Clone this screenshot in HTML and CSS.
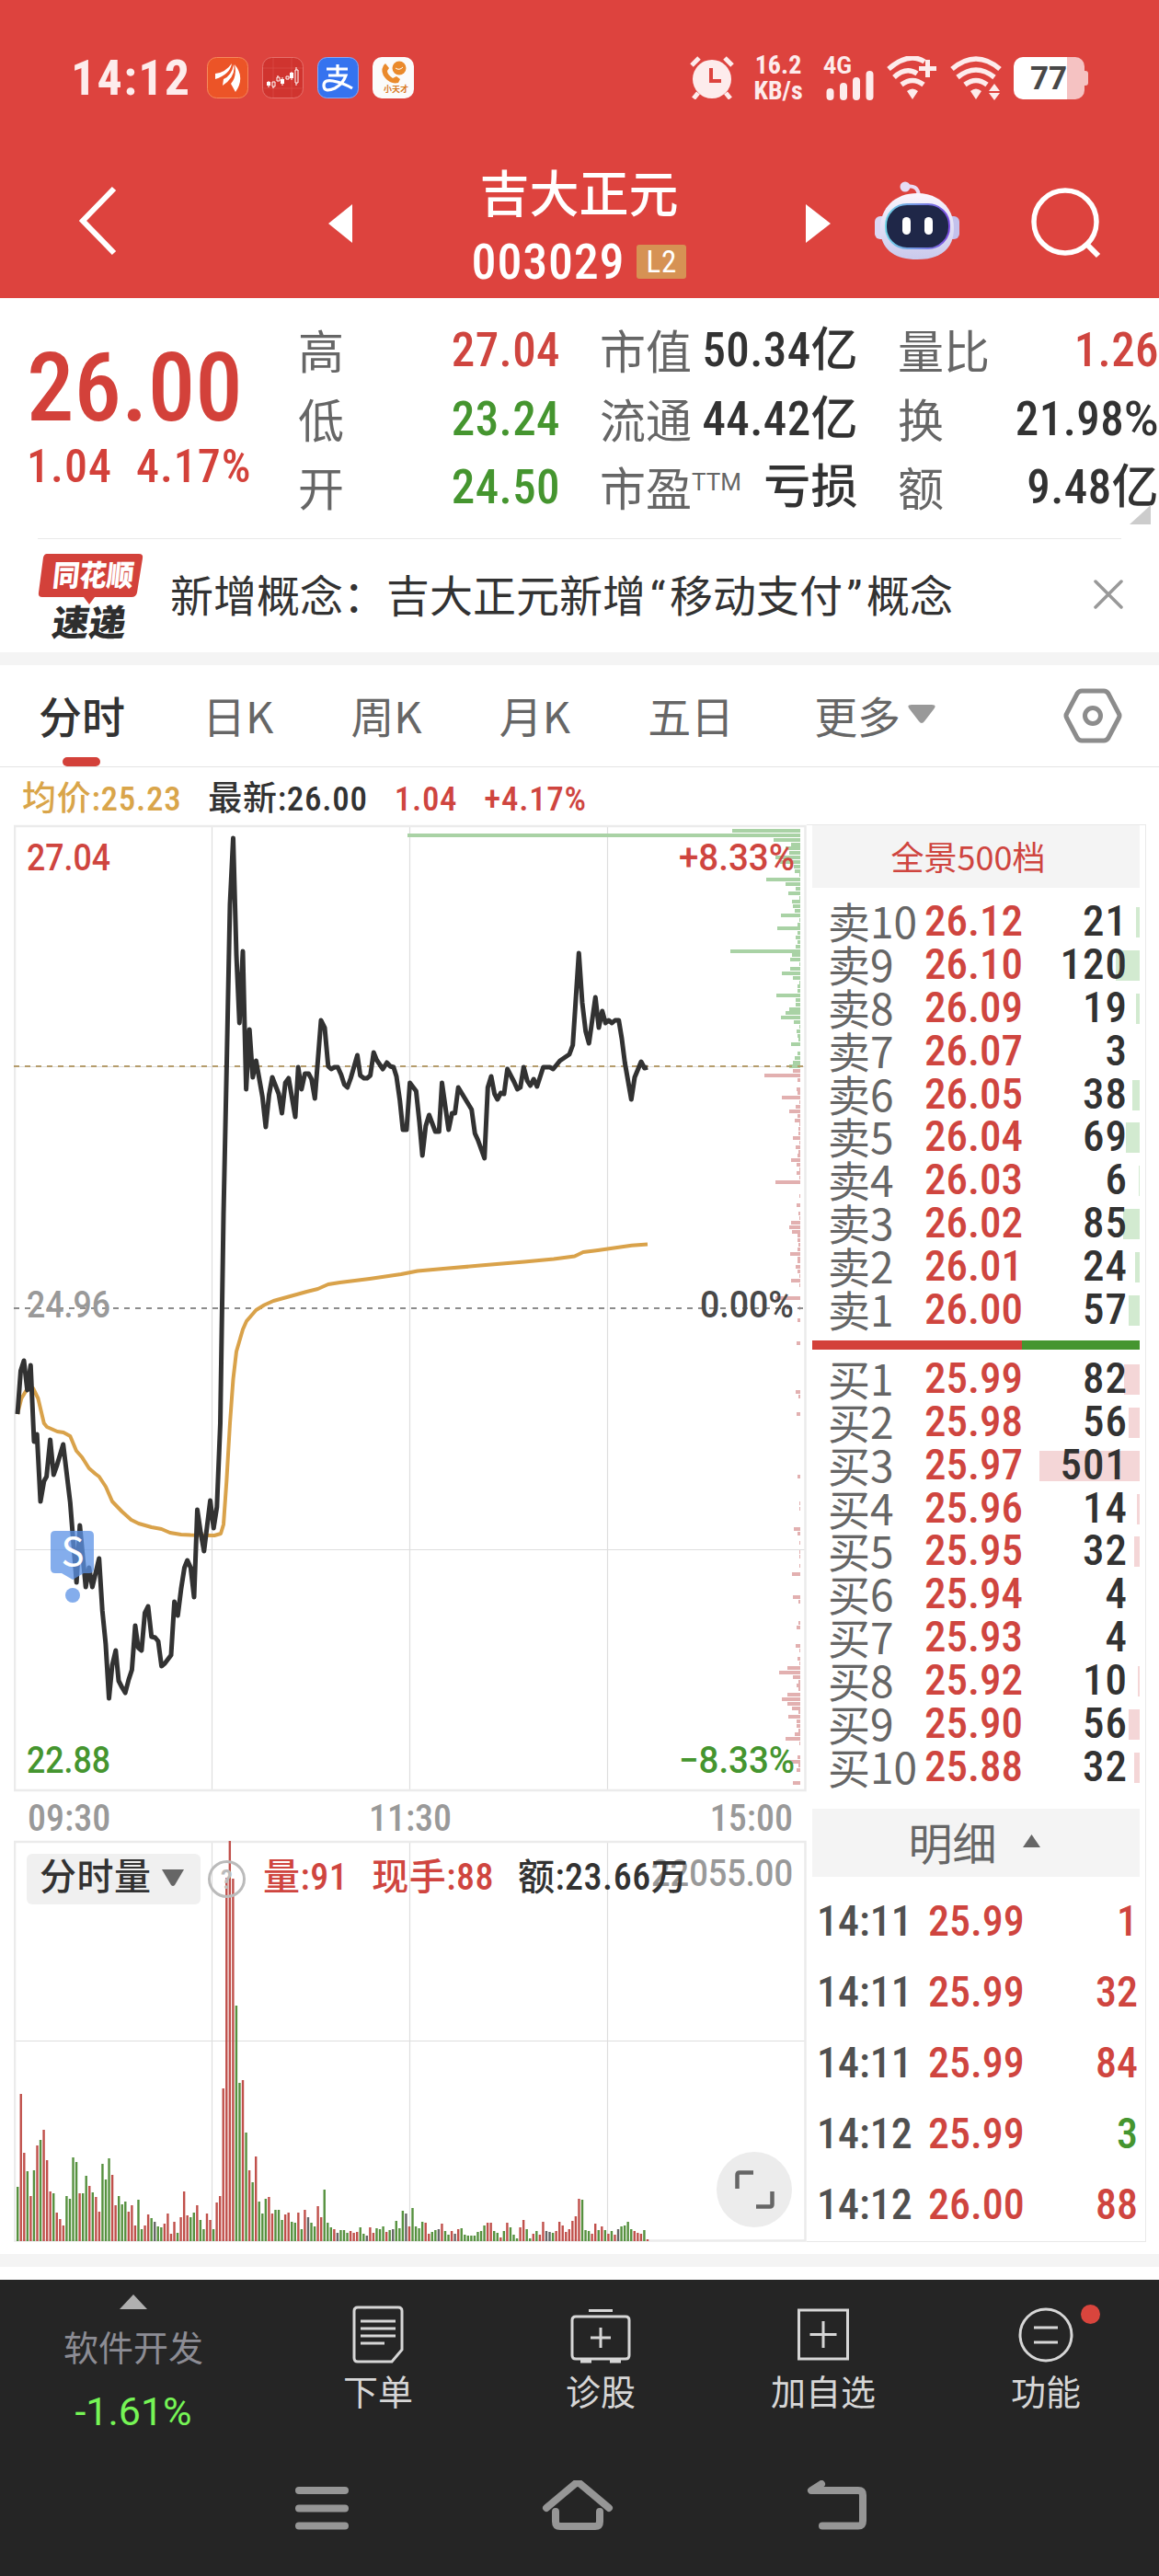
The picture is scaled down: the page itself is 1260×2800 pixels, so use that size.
FILE: index.html
```html
<!DOCTYPE html>
<html lang="zh-CN">
<head>
    <meta charset="UTF-8">
    <meta name="viewport" content="width=device-width, initial-scale=1.0">
    <title>吉大正元 003029</title>
    <link rel="stylesheet" href="styles.css">
</head>
<body>
    <header class="header">
        <div class="status-bar">
            <span class="clock">14:12</span>
            <div class="app-icons">
                <svg width="45" height="45" viewBox="0 0 45 45"><rect x=".5" y=".5" width="44" height="44" rx="10" fill="#ec5427" stroke="#f58a5c"/><path d="M9 24V18Q20 17 27 7Q25 19 9 24zM17 31L18 24Q27 20 29 8Q32 21 17 31zM31 38L26 29Q33 21 30 8Q42 22 31 38z" fill="#fff"/></svg>
                <svg width="45" height="45" viewBox="0 0 45 45"><rect x=".5" y=".5" width="44" height="44" rx="10" fill="#d0342f" stroke="#e5706b"/><path d="M12 1V44M32 1V44M1 12H44M1 34H44" stroke="#dc504a" stroke-width=".6"/><path d="M5 27h4v4H5zM20 24h4v5h-4zM30 17h4v6h-4z" fill="#fff"/><path d="M11 27h3v5h-3zM16 22h3v4h-3zM26 21h3v3h-3zM36 14h3v14h-3zM7 26v7M12 32v2M17 20v2M22 22v9M32 16v9M37 11v3M37 28v3" fill="none" stroke="#fff"/></svg>
                <svg width="45" height="45" viewBox="0 0 45 45"><rect x=".5" y=".5" width="44" height="44" rx="10" fill="#3573ef" stroke="#86aaf8"/><path d="M10 13H33M22 8V19M12 20H31Q28 29 19 34Q7 39 7 31Q7 24 17 26Q28 28 38 34" fill="none" stroke="#fff" stroke-width="3.2"/></svg>
                <svg width="45" height="45" viewBox="0 0 45 45"><rect width="45" height="45" rx="10" fill="#fbfbfb"/><circle cx="29" cy="12" r="7.5" fill="#ea8a2c"/><path d="M12 9Q8 16 14 23Q20 30 28 28L30 24L26 21L22 23Q16 19 16 15L18 12L14 7z" fill="#ea8a2c"/><path d="M25 12Q29 15 33 11" fill="none" stroke="#fff"/><text x="12" y="38" class="mini-text">小天才</text></svg>
            </div>
            <div class="status-right">
                <svg class="alarm" width="48" height="47" viewBox="0 0 48 47"><circle cx="24" cy="25" r="21" fill="#fdecec"/><path d="M2 10L10 2M38 2L46 10M9 40L4 46M39 40L44 46" stroke="#fdecec" stroke-width="5"/><path d="M23 13V27H34" fill="none" stroke="#dd433e" stroke-width="4"/></svg>
                <div class="speed">16.2<br>KB/s</div>
                <svg width="56" height="48" viewBox="0 0 56 48"><text x="0" y="19" class="net-text" textLength="31" lengthAdjust="spacingAndGlyphs">4G</text><path d="M7.500 39V44M22 33V44M36 27V44M50.500 20V44" stroke="#fdecec" stroke-width="8" stroke-linecap="round"/></svg>
                <svg class="wifi" width="56" height="48" viewBox="0 0 56 48"><path d="M2 14Q24-5 41 6M8 23Q21 11 33 19M16 31Q28 22 40 31" fill="none" stroke="#fdecec" stroke-width="5.500"/><path d="M22 38Q28 33 34 38L28 47zM42 4h5v7h7v5h-7v7h-5v-7h-7v-5h7z" fill="#fdecec"/></svg>
                <svg class="wifi" width="56" height="48" viewBox="0 0 56 48"><path d="M2 14Q28-8 54 14M8 23Q28 7 48 23M16 31Q28 22 40 31" fill="none" stroke="#fdecec" stroke-width="5.500"/><path d="M22 38Q28 33 34 38L28 47zM42 38l6-8 6 8zM42 40h12l-6 8z" fill="#fdecec"/></svg>
                <div class="battery">77</div>
            </div>
        </div>
        <div class="title-bar">
            <svg class="back" width="44" height="76" viewBox="0 0 44 76"><path d="M39 3L5 38L39 73" fill="none" stroke="#fff" stroke-width="6"/></svg>
            <svg class="prev" width="26" height="42" viewBox="0 0 26 42"><path d="M26 0V42L0 21z" fill="#fff"/></svg>
            <div class="stock">
                <div class="stock-name">吉大正元</div>
                <div class="stock-code"><span class="num">003029</span><span class="level">L2</span></div>
            </div>
            <svg class="next" width="27" height="42" viewBox="0 0 27 42"><path d="M0 0V42L27 21z" fill="#fff"/></svg>
            <svg class="robot" width="92" height="88" viewBox="0 0 92 88">
                <defs>
                    <linearGradient id="shell" x2="0" y2="1"><stop offset="0" stop-color="#fbf6fd"/><stop offset="1" stop-color="#c9c9ec"/></linearGradient>
                    <linearGradient id="rim"><stop offset="0" stop-color="#6fd3e6"/><stop offset="1" stop-color="#7a4be0"/></linearGradient>
                </defs>
                <path d="M34 7Q46 4 48 16" fill="none" stroke="#eadcf3" stroke-width="4"/><circle cx="33" cy="7" r="5.500" fill="#e6dcf5"/>
                <rect x="0" y="39" width="14" height="25" rx="6" fill="#dcd8f3"/><rect x="78" y="39" width="14" height="25" rx="6" fill="#c3c1ec"/>
                <path d="M46 14C70 14 86 30 86 52C86 74 72 86 46 86C20 86 6 74 6 52C6 30 22 14 46 14z" fill="url(#shell)"/>
                <rect x="12" y="26" width="69" height="48" rx="23" fill="#1f2748" stroke="url(#rim)" stroke-width="2"/>
                <rect x="30" y="40" width="9" height="19" rx="4.500" fill="#fff"/><rect x="54" y="40" width="9" height="19" rx="4.500" fill="#fff"/>
            </svg>
            <svg class="search" width="80" height="80" viewBox="0 0 80 80"><circle cx="38" cy="38" r="34" fill="none" stroke="#fff" stroke-width="5.500"/><path d="M61 62L74 75" stroke="#fff" stroke-width="6"/></svg>
        </div>
    </header>

    <section class="quote">
        <div class="price-box">
            <div class="price num">26.00</div>
            <div class="change num"><span>1.04</span><span>4.17%</span></div>
        </div>
        <dl class="stats">
            <div><dt>高</dt><dd class="num up">27.04</dd></div>
            <div><dt>市值</dt><dd class="num">50.34亿</dd></div>
            <div><dt>量比</dt><dd class="num up">1.26</dd></div>
            <div><dt>低</dt><dd class="num down">23.24</dd></div>
            <div><dt>流通</dt><dd class="num">44.42亿</dd></div>
            <div><dt>换</dt><dd class="num">21.98<span class="percent">%</span></dd></div>
            <div><dt>开</dt><dd class="num down">24.50</dd></div>
            <div><dt>市盈<sup>TTM</sup></dt><dd class="num">亏损</dd></div>
            <div><dt>额</dt><dd class="num">9.48亿</dd></div>
        </dl>
        <svg class="more-corner" width="23" height="21" viewBox="0 0 23 21"><path d="M23 0V21H0z" fill="#ccc"/></svg>
    </section>

    <section class="news">
        <svg class="news-logo" width="116" height="94" viewBox="0 0 116 94">
            <path d="M10 1H110Q115 1 114 6L108 43Q107 48 102 48H62L56 56L50 48H5Q0 48 1 43L6 5Q7 1 10 1z" fill="#d3413a"/>
            <text x="19" y="36" class="logo-top" transform="skewX(-6)" textLength="88" lengthAdjust="spacingAndGlyphs">同花顺</text>
            <text x="27" y="90" class="logo-bottom" transform="skewX(-8)" textLength="80" lengthAdjust="spacingAndGlyphs">速递</text>
        </svg>
        <p class="news-text">新增概念：吉大正元新增<span class="quote-mark">“</span>移动支付<span class="quote-mark">”</span>概念</p>
        <svg class="close" width="32" height="32" viewBox="0 0 32 32"><path d="M2 2L30 30M30 2L2 30" stroke="#999" stroke-width="3.500" stroke-linecap="round"/></svg>
    </section>

    <nav class="tabs">
        <a class="active">分时</a>
        <a>日K</a>
        <a>周K</a>
        <a>月K</a>
        <a>五日</a>
        <a class="more">更多<svg width="30" height="22" viewBox="0 0 30 22"><path d="M4 0H26Q32 0 28 5L18 18Q15 22 12 18L2 5Q-2 0 4 0z" fill="#999"/></svg></a>
        <svg class="setting" width="64" height="60" viewBox="0 0 64 60"><path d="M20 3H44Q47 3 49 6L60 27Q62 30 60 33L49 54Q47 57 44 57H20Q17 57 15 54L4 33Q2 30 4 27L15 6Q17 3 20 3z" fill="none" stroke="#8c8c8c" stroke-width="5"/><circle cx="32" cy="30" r="8.500" fill="none" stroke="#8c8c8c" stroke-width="5"/></svg>
    </nav>

    <main class="board">
        <div class="charts">
            <div class="legend num"><span class="avg">均价:25.23</span><span>最新:26.00</span><span class="up">1.04</span><span class="up">+4.17%</span></div>
            <svg class="price-chart" id="priceChart" width="862" height="1052" viewBox="15 896 862 1052">
                <path class="grid" d="M230.500 898V1946M445.500 898V1946M660.500 898V1946M15 1159.500H876M15 1684.500H876"/>
                <path class="frame" d="M16 898H875.500V1946H16z"/>
                <g id="chips"></g>
                <path class="last-line" d="M15 1159H876"/>
                <path class="base-line" d="M15 1422H876"/>
                <polyline id="avgLine" class="avg-line"/>
                <polyline id="priceLine" class="price-line"/>
                <g class="sell-mark">
                    <path d="M60 1664H97Q102 1664 102 1669V1705Q102 1710 97 1710H91L79 1717L67 1710H60Q55 1710 55 1705V1669Q55 1664 60 1664z"/>
                    <circle cx="79" cy="1734" r="8"/>
                    <text x="79" y="1702" text-anchor="middle">S</text>
                </g>
                <g class="axis-text">
                    <text class="t-up" x="29" y="946" textLength="91" lengthAdjust="spacingAndGlyphs">27.04</text>
                    <text class="t-up" x="738" y="946" textLength="126" lengthAdjust="spacingAndGlyphs">+8.33%</text>
                    <text class="t-gray" x="29" y="1432" textLength="91" lengthAdjust="spacingAndGlyphs">24.96</text>
                    <text class="t-dark" x="761" y="1432" textLength="102" lengthAdjust="spacingAndGlyphs">0.00%</text>
                    <text class="t-down" x="29" y="1927" textLength="91" lengthAdjust="spacingAndGlyphs">22.88</text>
                    <text class="t-down" x="738" y="1927" textLength="126" lengthAdjust="spacingAndGlyphs">−8.33%</text>
                </g>
            </svg>
            <div class="time-axis num"><span>09:30</span><span>11:30</span><span>15:00</span></div>
            <div class="volume">
                <svg id="volumeChart" width="862" height="437" viewBox="15 2000 862 437">
                    <path class="grid" d="M230.500 2002V2436M445.500 2002V2436M660.500 2002V2436M15 2218.500H876"/>
                    <path class="frame" d="M16 2002H875.500V2435.500H16z"/>
                    <g id="bars"></g>
                    <g class="axis-text"><text class="t-gray" x="708" y="2050" textLength="154" lengthAdjust="spacingAndGlyphs">22055.00</text></g>
                </svg>
                <div class="volume-legend num">
                    <span class="pill">分时量<svg width="24" height="18" viewBox="0 0 24 18"><path d="M0 0H24L14 17Q12 19 10 17z" fill="#666"/></svg></span>
                    <span class="help">?</span>
                    <span class="up">量:91</span><span class="up">现手:88</span><span>额:23.66万</span>
                </div>
                <svg class="expand" width="82" height="82" viewBox="0 0 82 82"><circle cx="41" cy="41" r="41" fill="#ececec"/><path d="M22.500 40V25Q22.500 22.500 25 22.500H40M60.500 43V57Q60.500 59.500 58 59.500H43" fill="none" stroke="#666" stroke-width="4.500"/></svg>
            </div>
        </div>

        <aside class="book">
            <div class="book-head">全景500档</div>
            <ul class="orders asks num">
                <li><i>卖10</i><b>26.12</b><em>21</em><s style="width: 4px"></s></li>
                <li><i>卖9</i><b>26.10</b><em>120</em><s style="width: 26px"></s></li>
                <li><i>卖8</i><b>26.09</b><em>19</em><s style="width: 4px"></s></li>
                <li><i>卖7</i><b>26.07</b><em>3</em><s style="width: 0"></s></li>
                <li><i>卖6</i><b>26.05</b><em>38</em><s style="width: 8px"></s></li>
                <li><i>卖5</i><b>26.04</b><em>69</em><s style="width: 15px"></s></li>
                <li><i>卖4</i><b>26.03</b><em>6</em><s style="width: 1px"></s></li>
                <li><i>卖3</i><b>26.02</b><em>85</em><s style="width: 18px"></s></li>
                <li><i>卖2</i><b>26.01</b><em>24</em><s style="width: 5px"></s></li>
                <li><i>卖1</i><b>26.00</b><em>57</em><s style="width: 12px"></s></li>
            </ul>
            <div class="ratio"><span style="width: 64.1%"></span></div>
            <ul class="orders bids num">
                <li><i>买1</i><b>25.99</b><em>82</em><s style="width: 17px"></s></li>
                <li><i>买2</i><b>25.98</b><em>56</em><s style="width: 12px"></s></li>
                <li><i>买3</i><b>25.97</b><em>501</em><s style="width: 109px"></s></li>
                <li><i>买4</i><b>25.96</b><em>14</em><s style="width: 3px"></s></li>
                <li><i>买5</i><b>25.95</b><em>32</em><s style="width: 6px"></s></li>
                <li><i>买6</i><b>25.94</b><em>4</em><s style="width: 0"></s></li>
                <li><i>买7</i><b>25.93</b><em>4</em><s style="width: 0"></s></li>
                <li><i>买8</i><b>25.92</b><em>10</em><s style="width: 2px"></s></li>
                <li><i>买9</i><b>25.90</b><em>56</em><s style="width: 12px"></s></li>
                <li><i>买10</i><b>25.88</b><em>32</em><s style="width: 6px"></s></li>
            </ul>
            <div class="book-head detail">明细<svg width="19" height="14" viewBox="0 0 19 14"><path d="M9.500 0L19 14H0z" fill="#666"/></svg></div>
            <ul class="ticks num">
                <li><i>14:11</i><b>25.99</b><em class="up">1</em></li>
                <li><i>14:11</i><b>25.99</b><em class="up">32</em></li>
                <li><i>14:11</i><b>25.99</b><em class="up">84</em></li>
                <li><i>14:12</i><b>25.99</b><em class="down">3</em></li>
                <li><i>14:12</i><b>26.00</b><em class="up">88</em></li>
            </ul>
        </aside>
    </main>

    <footer class="footer">
        <div class="actions">
            <div class="sector">
                <svg width="30" height="16" viewBox="0 0 30 16"><path d="M15 0L30 16H0z" fill="#b0b0b0"/></svg>
                <span>软件开发</span>
                <span class="sector-change">-1.61%</span>
            </div>
            <div class="action">
                <svg width="66" height="64" viewBox="0 0 66 64"><path d="M11 2H55Q59 2 59 6V48L48 61H11Q7 61 7 57V6Q7 2 11 2zM14 17H52M14 25H52M14 33H52M14 41H40"/></svg>
                <span>下单</span>
            </div>
            <div class="action">
                <svg width="66" height="64" viewBox="0 0 66 64"><path d="M6 12H60Q64 12 64 16V54Q64 58 60 58H6Q2 58 2 54V16Q2 12 6 12zM20 5.500H46M33 24V46M22 35H44M11 61H23M43 61H55"/></svg>
                <span>诊股</span>
            </div>
            <div class="action">
                <svg width="66" height="64" viewBox="0 0 66 64"><path d="M6.500 5H59.500V58H6.500zM33 17V46M18.500 31.500H47.500"/></svg>
                <span>加自选</span>
            </div>
            <div class="action">
                <svg width="66" height="64" viewBox="0 0 66 64"><circle cx="33" cy="32" r="28"/><path d="M20 24H46M20 40H46"/></svg>
                <span>功能</span>
                <em class="dot"></em>
            </div>
        </div>
        <div class="sys-nav">
            <svg width="62" height="60" viewBox="0 0 62 60"><path d="M6 11H56M6 30.500H56M6 49.500H56"/></svg>
            <svg width="78" height="60" viewBox="0 0 78 60"><path d="M5 30L36 4Q39 2 42 4L73 30M15 34V45Q15 50 20 50H58Q63 50 63 45V34"/></svg>
            <svg width="70" height="60" viewBox="0 0 70 60"><path d="M18 4L7 11H58Q63 11 63 16V44Q63 49.500 58 49.500H19"/></svg>
        </div>
    </footer>
    <script src="chart.js"></script>
</body>
</html>
```
FILE: styles.css
```css
* {
    box-sizing: border-box;
}
body {
    margin: 0;
    width: 1260px;
    height: 2800px;
    overflow: hidden;
    background-color: #fff;
    color: #323232;
    font-family: Roboto, "Noto Sans CJK SC", sans-serif;
}
svg {
    display: block;
    flex: none;
}
ul, dl, dd, p {
    margin: 0;
    padding: 0;
    list-style: none;
}
i, em, b, s {
    font-style: normal;
    text-decoration: none;
}
.num {
    font-weight: 500;
    font-stretch: 87%;
}
.up {
    color: #cf453f;
}
.down {
    color: #45952f;
}

/* header */
.header {
    height: 324px;
    background-color: #dd433e;
    color: #fff;
}
.status-bar {
    display: flex;
    align-items: center;
    height: 169px;
    padding: 0 81px 0 77px;
}
.clock {
    width: 148px;
    font-size: 54px;
    font-weight: 700;
    font-stretch: 87%;
    letter-spacing: 1.3px;
    color: #fdecec;
}
.app-icons {
    display: flex;
    gap: 15px;
}
.mini-text {
    font-size: 9px;
    font-weight: 700;
    fill: #d8791f;
    font-family: "Noto Sans CJK SC", sans-serif;
}
.status-right {
    display: flex;
    align-items: center;
    margin-left: auto;
    color: #fdecec;
}
.speed {
    width: 60px;
    margin: 0 19px 0 18px;
    font-size: 28px;
    line-height: 28px;
    font-weight: 700;
    font-stretch: 80%;
    text-align: center;
}
.net-text {
    font-size: 25px;
    font-weight: 700;
    fill: #fdecec;
}
.wifi {
    margin-left: 13px;
}
.battery {
    position: relative;
    width: 77px;
    height: 46px;
    margin-left: 13px;
    padding-right: 1px;
    border-radius: 10px;
    background: linear-gradient(90deg, #fff 58px, #f5c2c2 58px);
    color: #484848;
    font-size: 35px;
    line-height: 47px;
    font-weight: 700;
    text-align: center;
}
.battery::after {
    content: "";
    position: absolute;
    left: 77px;
    top: 15px;
    width: 4px;
    height: 16px;
    border-radius: 0 3px 3px 0;
    background-color: #f5c2c2;
}
.title-bar {
    display: flex;
    align-items: flex-start;
    height: 155px;
    padding-left: 85px;
}
.back {
    margin-top: 33px;
}
.prev {
    margin: 53px 0 0 228px;
}
.stock {
    width: 493px;
    text-align: center;
}
.stock-name {
    height: 83px;
    font-size: 54px;
    line-height: 88px;
    font-weight: 500;
}
.stock-code {
    display: flex;
    align-items: center;
    justify-content: center;
    gap: 13px;
    height: 64px;
    font-size: 54px;
    letter-spacing: .8px;
}
.level {
    width: 54px;
    height: 37px;
    border-radius: 3px;
    background-color: #d69254;
    font-size: 33px;
    line-height: 38px;
    font-stretch: 87%;
}
.next {
    margin-top: 53px;
}
.robot {
    margin: 27px 0 0 48px;
}
.search {
    margin: 34px 0 0 77px;
}

/* quote */
.quote {
    position: relative;
    display: flex;
    height: 262px;
    padding-top: 20px;
}
.quote::after {
    content: "";
    position: absolute;
    left: 41px;
    right: 41px;
    bottom: 0;
    height: 1px;
    background-color: #e9e9e9;
}
.price-box {
    width: 325px;
    padding-left: 29px;
    color: #d3413a;
}
.price {
    height: 126px;
    font-size: 103px;
    line-height: 155px;
}
.change {
    display: flex;
    gap: 26px;
    font-size: 50px;
    line-height: 74px;
    letter-spacing: 1px;
}
.stats {
    display: grid;
    grid-template-columns: 285px 281px 284px;
    column-gap: 43px;
    grid-auto-rows: 74.5px;
}
.stats div {
    display: flex;
    justify-content: space-between;
    font-size: 51px;
    line-height: 74px;
    white-space: nowrap;
}
.stats dt {
    color: #666;
    font-family: "Noto Sans CJK SC", sans-serif;
    font-size: 50px;
    line-height: 71px;
}
.stats dd {
    letter-spacing: .4px;
}
.percent {
    font-stretch: 100%;
}
.stats sup {
    font-family: Roboto, sans-serif;
    font-size: 26px;
    line-height: 0;
    vertical-align: 17px;
}
.more-corner {
    position: absolute;
    right: 9px;
    bottom: 16px;
}

/* news */
.news {
    display: flex;
    align-items: center;
    height: 137px;
    padding: 0 39px 0 41px;
    border-bottom: 14px solid #f4f4f4;
}
.news-logo {
    margin-top: 1px;
}
.logo-top, .logo-bottom {
    font-family: "Noto Sans CJK SC", sans-serif;
    font-weight: 900;
    fill: #fff;
    font-size: 32px;
}
.logo-bottom {
    font-size: 39px;
    fill: #2e2e2e;
}
.news-text {
    margin: -2px auto 0 28px;
    font-family: "Noto Sans CJK SC", sans-serif;
    font-size: 47px;
    line-height: 60px;
    white-space: nowrap;
}
.quote-mark {
    display: inline-block;
    width: 26px;
    font-family: Roboto, sans-serif;
    text-align: center;
}
.close {
    margin-top: -4px;
}

/* tabs */
.tabs {
    display: flex;
    align-items: center;
    height: 111px;
    border-bottom: 1px solid #e4e4e4;
    color: #666;
    font-family: "Noto Sans CJK SC", sans-serif;
    font-size: 47px;
    padding: 0 40px 0 42px;
}
.tabs a {
    display: flex;
    align-items: center;
    position: relative;
    height: 111px;
    padding-bottom: 3px;
    margin-right: 84px;
}
.tabs a.active {
    color: #323232;
    font-weight: 500;
}
.tabs a.active::after {
    content: "";
    position: absolute;
    left: 26px;
    bottom: 1px;
    width: 41px;
    height: 10px;
    border-radius: 5px;
    background-color: #d3413a;
}
.tabs .more {
    gap: 8px;
    margin-left: 3px;
    margin-right: auto;
}

/* board */
.board {
    display: flex;
    height: 1630px;
    padding-left: 15px;
    border-bottom: 14px solid #f4f4f4;
}
.charts {
    width: 862px;
}
.legend {
    display: flex;
    gap: 29px;
    height: 62px;
    padding-left: 9px;
    font-size: 37px;
    line-height: 69px;
    letter-spacing: .7px;
    white-space: nowrap;
}
.avg {
    color: #d9a54a;
}
.frame {
    fill: none;
    stroke: #ebebeb;
    stroke-width: 2.5;
}
.grid {
    fill: none;
    stroke: #dedede;
    stroke-width: 1.2;
}
.last-line, .base-line {
    fill: none;
    stroke: #b59c6c;
    stroke-width: 2;
    stroke-dasharray: 6 6;
}
.base-line {
    stroke: #8c8c8c;
}
.avg-line, .price-line {
    fill: none;
    stroke: #d9a24a;
    stroke-width: 4;
    stroke-linejoin: round;
}
.price-line {
    stroke: #323232;
    stroke-width: 5;
}
.chip-up {
    fill: #a9d2a5;
}
.chip-down {
    fill: #e2b0b0;
}
.sell-mark {
    fill: #5b92e5;
    fill-opacity: .75;
}
.sell-mark text {
    fill: #fff;
    fill-opacity: 1;
    font-size: 42px;
    font-family: "Noto Sans CJK SC", sans-serif;
}
.axis-text {
    font-size: 40px;
    font-weight: 500;
}
.t-up { fill: #cf453f; }
.t-down { fill: #45952f; }
.t-gray { fill: #999; }
.t-dark { fill: #484848; }
.time-axis {
    display: flex;
    justify-content: space-between;
    height: 52px;
    padding: 0 15px;
    font-size: 40px;
    line-height: 57px;
    color: #999;
}
.volume {
    position: relative;
}
.volume-legend {
    position: absolute;
    left: 14px;
    top: 15px;
    display: flex;
    align-items: center;
    gap: 26px;
    height: 55px;
    font-size: 40px;
    line-height: 50px;
    letter-spacing: .5px;
    white-space: nowrap;
}
.volume-legend .up, .volume-legend .up + span {
    padding-bottom: 3px;
}
.pill {
    display: flex;
    align-items: center;
    gap: 11px;
    width: 189px;
    height: 55px;
    padding: 0 0 3px 14px;
    border-radius: 6px;
    background-color: #f0f0f0;
}
.help {
    width: 41px;
    height: 41px;
    margin: 0 -7px 0 -18px;
    border: 3px solid #bbb;
    border-radius: 50%;
    color: #bbb;
    font-size: 30px;
    line-height: 36px;
    text-align: center;
}
.expand {
    position: absolute;
    right: 16px;
    bottom: 16px;
}
.bar-r { fill: #c0504b; }
.bar-g { fill: #56913f; }
.bar-k { fill: #666; }

/* order book */
.book {
    width: 369px;
    height: 1541px;
    margin-top: 62px;
    padding: 0 6px;
    border: 1px solid #e9e9e9;
    border-left: none;
}
.book-head {
    display: flex;
    align-items: center;
    justify-content: center;
    height: 68px;
    padding: 0 17px 3px 0;
    background-color: #f4f4f4;
    color: #cf453f;
    font-family: "Noto Sans CJK SC", sans-serif;
    font-size: 36px;
}
.orders {
    padding-top: 13px;
}
.orders li {
    position: relative;
    display: grid;
    grid-template-columns: 105px 110px 1fr;
    height: 46.9px;
    padding: 0 13px 0 17px;
    font-size: 47px;
    line-height: 46px;
    white-space: nowrap;
}
.orders i {
    color: #666;
    font-family: "Noto Sans CJK SC", sans-serif;
    font-weight: 400;
    font-size: 46px;
    line-height: 44px;
}
.orders b, .ticks b {
    color: #cf453f;
    font-weight: 500;
}
.orders em {
    position: relative;
    z-index: 1;
    text-align: right;
    letter-spacing: 1px;
}
.orders s {
    position: absolute;
    right: 0;
    top: 8px;
    height: 33px;
    background-color: #d2ead0;
}
.bids s {
    background-color: #f4d6d7;
}
.ratio {
    height: 10px;
    margin-top: 10px;
    background-color: #45952f;
}
.ratio span {
    display: block;
    height: 10px;
    background-color: #d3413a;
}
.bids {
    padding-top: 8px;
}
.detail {
    gap: 28px;
    height: 74px;
    margin-top: 22px;
    padding-right: 4px;
    color: #666;
    font-size: 48px;
}
.ticks {
    padding-top: 9px;
}
.ticks li {
    display: grid;
    grid-template-columns: 121px 110px 1fr;
    height: 77px;
    padding: 0 2px 0 5px;
    font-size: 46px;
    line-height: 78px;
}
.ticks i {
    color: #505050;
}
.ticks em {
    text-align: right;
}

/* footer */
.footer {
    height: 322px;
    margin-top: 14px;
    background-color: #252525;
    color: #d6d6d6;
    font-size: 38px;
}
.actions {
    display: grid;
    grid-template-columns: 290px repeat(4, 242px);
    height: 200px;
}
.action {
    position: relative;
    display: flex;
    flex-direction: column;
    align-items: center;
    padding-top: 28px;
}
.action svg {
    fill: none;
    stroke: #d6d6d6;
    stroke-width: 3;
}
.action span {
    margin-top: 3px;
    line-height: 56px;
}
.sector {
    display: flex;
    flex-direction: column;
    align-items: center;
    width: 290px;
    padding-top: 16px;
    color: #8c8c94;
    line-height: 56px;
}
.sector svg {
    margin-bottom: 15px;
}
.sector-change {
    margin-top: 15px;
    color: #76f556;
    font-size: 43px;
    line-height: 50px;
}
.dot {
    position: absolute;
    left: 159px;
    top: 27px;
    width: 21px;
    height: 21px;
    border-radius: 50%;
    background-color: #d9453d;
}
.sys-nav {
    display: flex;
    padding: 18px 0 0 319px;
}
.sys-nav svg {
    margin-right: 208px;
    fill: none;
    stroke: #969696;
    stroke-width: 8;
    stroke-linecap: round;
    stroke-linejoin: round;
}
```
FILE: chart.js
```js
const NS = "http://www.w3.org/2000/svg";

const price = "19,1537 22.5,1490 26,1479 29.7,1511 33.3,1484 37,1567 40.2,1559 44,1632 47.8,1610 50.6,1605 54.6,1565 58.3,1603 61.5,1594 68.7,1570 76.3,1633 83.2,1720 86.8,1658 93.2,1725 96.8,1704 100.4,1725 107.7,1694 111.3,1751 114.9,1787 118.5,1846 122,1810 125.8,1794 129,1827 132.6,1834 136.2,1840 139.8,1826 143.4,1815 147,1767 150.3,1791 153.9,1794 157.5,1753 161,1746 164.7,1779 168.7,1780 172,1784 175.6,1811 179.2,1808 186,1799 189.6,1741 193.3,1756 196.9,1727 200.5,1704 203.7,1696 207.3,1704 211,1736 214.5,1641 218.2,1666 221.8,1686 228.6,1631 232.2,1661 235.8,1638 239.5,1547 243,1320 246.7,1145 250,983 253.5,911 257,1038 260.3,1112 264,1034 267.6,1184 271.2,1119 274.8,1171 278.4,1153 285.3,1192 288.9,1225 292.5,1190 296,1171 303,1189 306.5,1210 310.2,1177 313.8,1172 321,1214 324.2,1160 327.8,1184 331.5,1167 335.5,1167 338.7,1173 342.3,1194 349,1109 353,1117 356.8,1159 360,1162 363.6,1160 367.2,1160 370.8,1168 374.4,1179 377.7,1182 381.3,1172 388.5,1147 391.7,1169 395.7,1172 399,1172 402.6,1169 406.2,1144 409.4,1152 416.2,1162 420.6,1155 424.3,1159 427.9,1160 431,1170 434.7,1196 438,1228 442,1228 445.6,1177 452.4,1186 456,1220 459.2,1256 462.8,1224 466.5,1212 473.3,1230 477.3,1230 480.5,1177 487.7,1228 491.4,1210 494.6,1210 498.2,1182 512.7,1206 516.3,1232 519.5,1239 526.7,1259 530.3,1182 534,1170 537.6,1189 540.8,1195 544.4,1188 548,1189 551.6,1162 558.9,1176 562.5,1184 565.7,1182 569.3,1160 573.3,1175 576.5,1180 580.2,1173 583.8,1181 590.6,1160 597.8,1160 601.4,1162 608.7,1153 619,1146 622.7,1136 629.3,1036 633,1090 636.7,1121 640.3,1134 647.3,1084 651,1117 654.7,1099 658.3,1112 661.7,1109 665.3,1112 668.7,1109 672.7,1109 676,1129 679.3,1155 686.3,1195 690,1171 697,1154 700.7,1161 704,1160";
const average = "19,1537 23.3,1520 30,1509 36,1509 41.4,1520 47.8,1547 51,1551 62.3,1556 69,1557 76.3,1561 83,1577 89.2,1584 96.8,1596 103.7,1602 107.7,1605 115,1616 122,1632 132.6,1643 142.6,1652 150.7,1656 164.7,1660 175.6,1662 184.8,1666 196.9,1668 207.3,1668.500 233,1669 240,1667 243,1657 246.3,1610 250,1547 253.5,1499 257,1469 264,1445 268,1436 278.4,1424 287.3,1418.500 297.3,1414 315.4,1409 333.5,1404 345.5,1401 356.8,1396 369.6,1394 401.8,1390 436,1385 454,1381.500 482,1379 522,1375.600 570,1371.400 602,1368.400 624.7,1365.500 634,1361 650,1359 686.7,1353.700 704,1352.500";

// y position and width of each price level, drawn from the right side
const chipsUp = [[903,74],[908,427],[913,29],[918,10],[922,16],[927,12],[932,27],[937,22],[942,7],[947,6],[951,1],[956,37],[961,16],[966,5],[971,13],[976,1],[980,9],[985,8],[990,6],[995,21],[1000,1],[1005,3],[1009,25],[1014,3],[1019,5],[1024,3],[1029,5],[1034,76],[1038,9],[1043,11],[1048,1],[1053,11],[1058,20],[1063,8],[1068,1],[1072,3],[1077,3],[1082,26],[1087,5],[1092,5],[1097,12],[1101,16],[1106,21],[1111,7],[1116,1],[1121,4],[1126,3],[1130,2],[1135,10],[1145,3],[1150,6],[1155,8],[1159,12]];
const chipsDown = [[1164,8],[1169,39],[1174,3],[1184,4],[1188,3],[1193,20],[1198,1],[1203,5],[1208,12],[1213,3],[1218,6],[1222,1],[1227,2],[1232,2],[1237,8],[1242,1],[1247,5],[1252,2],[1256,3],[1261,10],[1266,4],[1271,1],[1275,4],[1280,1],[1285,27],[1300,1],[1310,4],[1319,2],[1324,1],[1329,10],[1334,12],[1339,9],[1343,3],[1348,3],[1353,2],[1358,3],[1363,11],[1368,3],[1371,3],[1377,5],[1382,3],[1387,1],[1392,10],[1397,1],[1411,27],[1422,1],[1435,3],[1460,4],[1513,5],[1518,2],[1537,4],[1605,3],[1634,1],[1640,1],[1662,7],[1667,3],[1677,1],[1687,1],[1692,1],[1702,1],[1711,9],[1736,8],[1741,2],[1764,2],[1769,4],[1789,5],[1794,1],[1803,3],[1808,1],[1813,14],[1818,23],[1823,8],[1828,2],[1832,4],[1836,2],[1842,14],[1847,20],[1852,14],[1857,9],[1861,2],[1866,13],[1871,4],[1876,4],[1881,2],[1885,6],[1890,16],[1895,1],[1910,3],[1915,12],[1919,2],[1924,4],[1938,8]];

// one bar per minute: colour and height
const volume = "g59 r160 r96 g76 r49 g77 r104 g110 r121 r88 r54 g52 r31 r24 r17 g49 g46 g91 g86 r52 g52 g71 r60 g53 r48 r32 g84 g67 g90 r72 r39 g49 g40 g43 r32 r39 r17 g45 g13 r17 r29 g25 k21 g16 g15 r19 r30 r8 r21 g9 r26 r54 r28 g26 g31 r39 g23 g13 r30 r23 g13 r42 r49 r166 r395 r435 r394 g256 g172 r175 g118 r77 g64 r92 g43 g30 g46 r48 r30 g34 g34 g23 r29 r31 g21 g20 r31 g13 r34 k26 g20 g16 r38 r26 g56 g20 g15 r13 k9 g12 g12 g9 r11 r9 r10 g15 g8 k6 r15 r9 g14 g13 g16 r10 g12 k13 g22 g14 g33 k30 r16 g36 g16 g14 g21 r20 r8 g10 g12 k13 r19 g11 g7 r11 k8 r13 g14 g7 g6 g6 g6 g10 g11 g17 r20 r20 g11 g9 r4 g11 r20 g15 g7 g3 r15 r23 g13 g3 r8 g11 r7 r21 k11 k10 g9 r11 r21 r17 r10 r13 r22 r27 r46 g45 g12 g11 r8 r19 g12 r16 g12 r8 g11 r7 k13 g16 g17 g21 g13 r11 r9 r8 g12 r2".split(" ");

function addRect(parent, className, x, y, width, height) {
    const rect = document.createElementNS(NS, "rect");
    rect.setAttribute("class", className);
    rect.setAttribute("x", x);
    rect.setAttribute("y", y);
    rect.setAttribute("width", width);
    rect.setAttribute("height", height);
    parent.appendChild(rect);
}

document.getElementById("priceLine").setAttribute("points", price);
document.getElementById("avgLine").setAttribute("points", average);

const chips = document.getElementById("chips");
chipsUp.forEach(([y, w]) => addRect(chips, "chip-up", 870 - w, y - 2, w, 4));
chipsDown.forEach(([y, w]) => addRect(chips, "chip-down", 870 - w, y - 2, w, 4));

const bars = document.getElementById("bars");
volume.forEach((item, i) => {
    const height = Number(item.slice(1));
    addRect(bars, "bar-" + item[0], 18 + i * 3.548, 2436 - height, 2.4, height);
});
```
